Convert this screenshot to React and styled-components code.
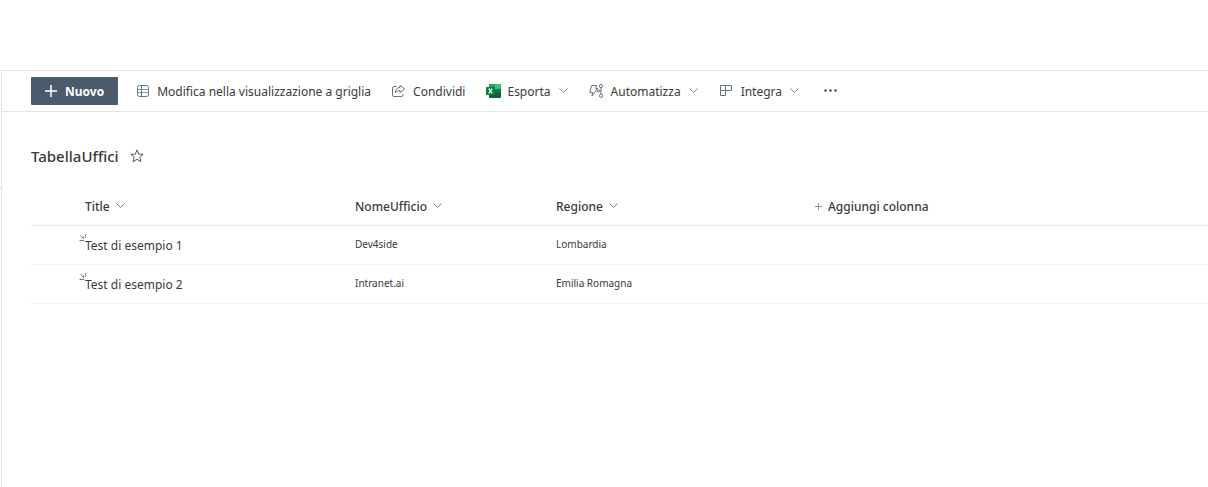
import React from 'react'
import styled, { createGlobalStyle } from 'styled-components'

const columns = [
    { key: 'title', label: 'Title', width: 270 },
    { key: 'office', label: 'NomeUfficio', width: 201 },
    { key: 'region', label: 'Regione', width: 259 }
]

const rows = [
    { title: 'Test di esempio 1', office: 'Dev4side', region: 'Lombardia' },
    { title: 'Test di esempio 2', office: 'Intranet.ai', region: 'Emilia Romagna' }
]

const Chevron = () => (
    <Icon width="10" height="10" viewBox="0 0 10 10">
        <path d="M0.5 2.5 L4.5 6.5 L8.5 2.5" />
    </Icon>
)

const PlusIcon = ({ size, weight = 1 }) => (
    <Icon width={size} height={size} viewBox="0 0 12 12" stroke="currentColor">
        <path d="M6 0 V12 M0 6 H12" strokeWidth={weight} />
    </Icon>
)

const GridIcon = () => (
    <Icon width="16" height="16" viewBox="0 0 16 16">
        <rect x="2.5" y="2.5" width="11" height="11" rx="2" />
        <path d="M2.5 6.5 H13.5 M2.5 9.5 H13.5" stroke="#6f9db5" />
        <path d="M6.5 2.5 V13.5" />
    </Icon>
)

const ShareIcon = () => (
    <Icon width="16" height="16" viewBox="0 0 16 16">
        <path d="M5.5 3.5 H3 Q1.5 3.5 1.5 5 V12 Q1.5 13.5 3 13.5 H10.5 Q12 13.5 12 12 V10.8" />
        <path d="M9 2.3 L13.5 6 L9 9.7 V7.6 C7 7.5 5.5 8.3 4.3 10 C4.5 6.8 6 4.7 9 4.4 Z" />
    </Icon>
)

const ExcelIcon = () => (
    <Icon width="16" height="16" viewBox="0 0 16 16" stroke="none">
        <rect x="4" y="1" width="12" height="14" rx="1" fill="#185c37" />
        <rect x="4" y="1" width="6" height="5" fill="#21a366" />
        <rect x="10" y="1" width="6" height="5" fill="#33c481" />
        <rect x="10" y="6" width="6" height="4" fill="#107c41" />
        <rect x="1" y="4" width="9" height="8" rx="1" fill="#107c41" />
        <path d="M3.8 5.7 L7.2 10.3 M7.2 5.7 L3.8 10.3" stroke="#ffffff" strokeWidth="1.3" />
    </Icon>
)

const FlowIcon = () => (
    <Icon width="16" height="16" viewBox="0 0 16 16">
        <path d="M2.7 2.5 H7.8 L6.6 5.5 H8.6 L3 13 L3.6 9.3 H0.8 Z" />
        <circle cx="12" cy="3" r="1.6" />
        <circle cx="12" cy="12.8" r="1.6" />
        <circle cx="9.3" cy="8" r="1.1" />
        <path d="M12 4.6 V11.2 M10.4 8 H12" />
    </Icon>
)

const IntegrateIcon = () => (
    <Icon width="16" height="16" viewBox="0 0 16 16">
        <path d="M1.5 2.5 H12.5 V7.5 H1.5 Z M1.5 7.5 V12.5 H6.5 V2.5" />
    </Icon>
)

const StarIcon = () => (
    <Icon width="14" height="14" viewBox="0 0 14 14" stroke="#555555">
        <path d="M7 1 L8.7 5.1 L13.2 5.4 L9.8 8.3 L10.9 12.7 L7 10.3 L3.1 12.7 L4.2 8.3 L0.8 5.4 L5.3 5.1 Z" />
    </Icon>
)

const NewMark = () => (
    <Mark width="9" height="9" viewBox="0 0 9 9" role="img" aria-label="Nuovo elemento">
        <path d="M0.5 7.5 H5 M1.5 2.5 L4.5 5.5 V3.5" />
        <path d="M6.5 1 V5" stroke="#6fa8cc" />
    </Mark>
)

const commands = [
    { label: 'Modifica nella visualizzazione a griglia', icon: GridIcon },
    { label: 'Condividi', icon: ShareIcon },
    { label: 'Esporta', icon: ExcelIcon, menu: true, accent: true },
    { label: 'Automatizza', icon: FlowIcon, menu: true },
    { label: 'Integra', icon: IntegrateIcon, menu: true }
]

const App = () => (
    <Page>
        <GlobalStyle />
        <TopSpace />
        <Body>
            <Rail><RailMark /></Rail>
            <Panel>
                <Toolbar>
                    <NewButton type="button"><PlusIcon size="12" weight={1.5} />Nuovo</NewButton>
                    {commands.map(({ label, icon: CommandIcon, menu, accent }) => (
                        <Command type="button" key={label}>
                            <CommandIcon />
                            <span>{label}</span>
                            {menu && <ChevronBox $accent={accent}><Chevron /></ChevronBox>}
                        </Command>
                    ))}
                    <MoreButton type="button" aria-label="Altro">
                        <Icon width="16" height="16" viewBox="0 0 16 16" stroke="none" fill="#444444">
                            <circle cx="3.5" cy="7.5" r="1.2" />
                            <circle cx="8.5" cy="7.5" r="1.2" />
                            <circle cx="13.5" cy="7.5" r="1.2" />
                        </Icon>
                    </MoreButton>
                </Toolbar>
                <Content>
                    <Heading>
                        <ListName>TabellaUffici</ListName>
                        <PlainButton type="button" aria-label="Aggiungi ai preferiti"><StarIcon /></PlainButton>
                    </Heading>
                    <Table>
                        <colgroup>
                            <Column $width={54} />
                            {columns.map(({ key, width }) => <Column key={key} $width={width} />)}
                            <col />
                        </colgroup>
                        <thead>
                            <tr>
                                <HeaderCell as="td" />
                                {columns.map(({ key, label }) => (
                                    <HeaderCell key={key} scope="col">
                                        <PlainButton type="button">{label}<ChevronBox><Chevron /></ChevronBox></PlainButton>
                                    </HeaderCell>
                                ))}
                                <HeaderCell scope="col">
                                    <PlainButton type="button"><Thin><PlusIcon size="7" weight={1.5} /></Thin>Aggiungi colonna</PlainButton>
                                </HeaderCell>
                            </tr>
                        </thead>
                        <tbody>
                            {rows.map(({ title, office, region }) => (
                                <tr key={title}>
                                    <Cell />
                                    <Cell><ItemLink href="#"><NewMark />{title}</ItemLink></Cell>
                                    <Cell $small>{office}</Cell>
                                    <Cell $small>{region}</Cell>
                                    <Cell />
                                </tr>
                            ))}
                        </tbody>
                    </Table>
                </Content>
            </Panel>
        </Body>
    </Page>
)

const GlobalStyle = createGlobalStyle`
    * {
        box-sizing: border-box;
    }

    body {
        background: #ffffff;
        color: #3b3a39;
        font-family: 'Noto Sans', 'Open Sans', sans-serif;
        font-size: 12px;
        margin: 0;
    }

    button {
        background: none;
        border: 0;
        color: inherit;
        cursor: pointer;
        font: inherit;
        padding: 0;
    }
`

const Page = styled.div`
    display: flex;
    flex-direction: column;
    min-height: 100vh;
`

const TopSpace = styled.div`
    border-bottom: 1px solid #e6e6e6;
    height: 71px;
`

const Body = styled.div`
    display: flex;
    flex: 1;
`

const Rail = styled.div`
    padding-top: 116px;
    width: 1px;
`

const RailMark = styled.div`
    background: #dddddd;
    height: 2px;
`

const Panel = styled.main`
    border-left: 1px solid #e6e6e6;
    flex: 1;
`

const Toolbar = styled.div`
    align-items: center;
    border-bottom: 1px solid #e6e6e6;
    display: flex;
    gap: 20px;
    height: 41px;
    padding-left: 29px;
`

const Icon = styled.svg.attrs(props => ({
    fill: props.fill || 'none',
    stroke: props.stroke || '#66727d',
    'aria-hidden': true
}))`
    display: block;
    flex: none;
`

const Command = styled.button`
    align-items: center;
    display: flex;
    gap: 6px;
    height: 28px;
    white-space: nowrap;
`

const NewButton = styled(Command)`
    background: #4c5b6b;
    border-radius: 1px;
    color: #ffffff;
    font-weight: 700;
    gap: 8px;
    margin-right: -3px;
    padding: 0 14px;
`

const MoreButton = styled(Command)`
    margin-left: 2px;
`

const ChevronBox = styled.span`
    margin-left: 2px;

    svg {
        stroke: ${props => props.$accent ? '#5f9bc4' : '#808080'};
    }
`

const Content = styled.div`
    padding: 32px 0 0 29px;
`

const Heading = styled.div`
    align-items: center;
    display: flex;
    gap: 11px;
    height: 24px;
    margin-bottom: 19px;
`

const ListName = styled.h1`
    font-size: 15px;
    font-weight: 500;
    line-height: 24px;
    margin: 0;
`

const PlainButton = styled.button`
    align-items: center;
    display: flex;
    gap: 4px;
`

const Table = styled.table`
    border-collapse: separate;
    border-spacing: 0;
    table-layout: fixed;
    width: 100%;
`

const Column = styled.col`
    width: ${props => props.$width}px;
`

const HeaderCell = styled.th`
    border-bottom: 1px solid #eaeaea;
    font-weight: 500;
    height: 39px;
    padding: 0;
    text-align: left;
`

const Cell = styled.td`
    border-bottom: 1px solid #f0f0f0;
    font-size: ${props => props.$small ? 10 : 12}px;
    height: 39px;
    padding: ${props => props.$small ? '0 0 2px' : '0'};
`

const ItemLink = styled.a`
    color: inherit;
    position: relative;
    text-decoration: none;
`

const Mark = styled.svg`
    fill: none;
    left: -6px;
    position: absolute;
    stroke: #777777;
    top: -4px;
`

const Thin = styled.span`
    color: #888888;
    margin-right: 2px;
`

export default App
